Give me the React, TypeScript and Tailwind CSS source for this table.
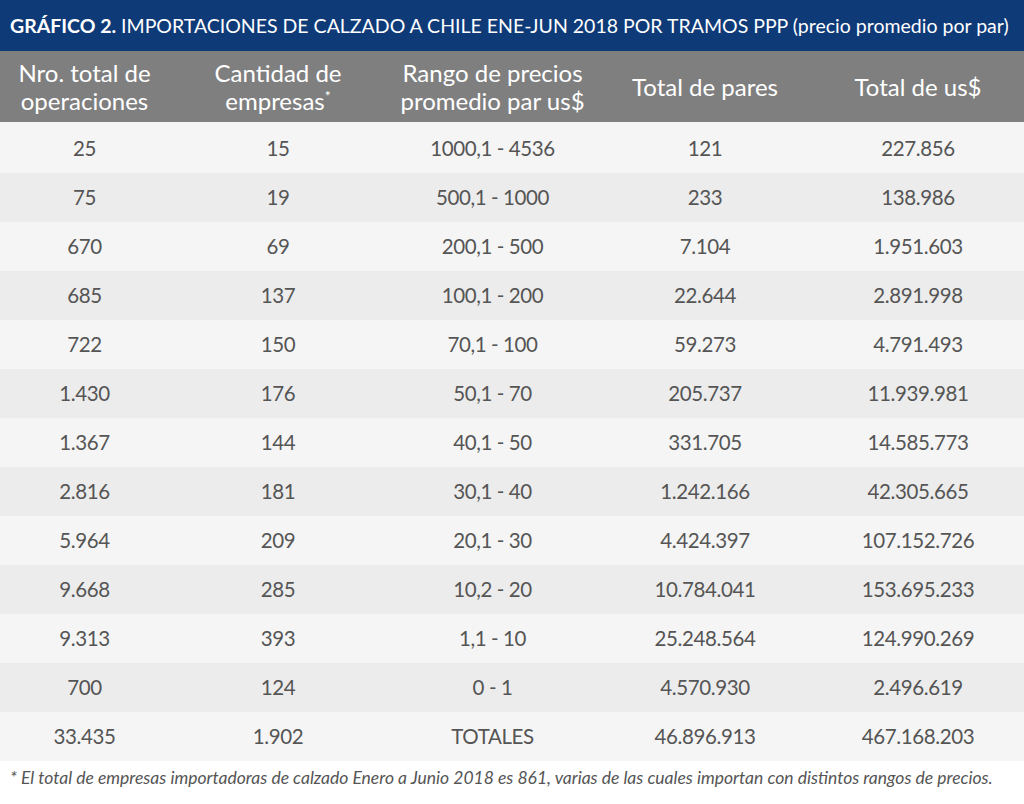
import React from "react";

const T = " - ";
const rows: string[][] = [
  ["25", "15", `1000,1${T}4536`, "121", "227.856"],
  ["75", "19", `500,1${T}1000`, "233", "138.986"],
  ["670", "69", `200,1${T}500`, "7.104", "1.951.603"],
  ["685", "137", `100,1${T}200`, "22.644", "2.891.998"],
  ["722", "150", `70,1${T}100`, "59.273", "4.791.493"],
  ["1.430", "176", `50,1${T}70`, "205.737", "11.939.981"],
  ["1.367", "144", `40,1${T}50`, "331.705", "14.585.773"],
  ["2.816", "181", `30,1${T}40`, "1.242.166", "42.305.665"],
  ["5.964", "209", `20,1${T}30`, "4.424.397", "107.152.726"],
  ["9.668", "285", `10,2${T}20`, "10.784.041", "153.695.233"],
  ["9.313", "393", `1,1${T}10`, "25.248.564", "124.990.269"],
  ["700", "124", `0${T}1`, "4.570.930", "2.496.619"],
  ["33.435", "1.902", "TOTALES", "46.896.913", "467.168.203"],
];

const widths = ["w-[169px]", "w-[218px]", "w-[211px]", "w-[214px]", "flex-1"];

export default function App() {
  return (
    <div
      className="w-[1024px] h-[804px] bg-white flex flex-col"
      style={{ fontFamily: "Lato, 'Noto Sans', sans-serif" }}
    >
      <div className="h-[51px] bg-[#0e3a78] text-white text-[19.5px] flex items-center px-[10px] whitespace-nowrap">
        <span className="font-bold">GRÁFICO 2.</span>
        <span>&nbsp;IMPORTACIONES DE CALZADO A CHILE ENE-JUN 2018 POR TRAMOS PPP (precio promedio por par)</span>
      </div>
      <div className="h-[71px] bg-[#7f7f7f] text-white text-[24px] leading-[28px] flex items-center">
        <div className={`${widths[0]} text-center`}>Nro. total de<br />operaciones</div>
        <div className={`${widths[1]} text-center`}>
          Cantidad de
          <br />
          empresas<span className="text-[14px] leading-none relative -top-[9px]">*</span>
        </div>
        <div className={`${widths[2]} text-center`}>Rango de precios<br />promedio par us$</div>
        <div className={`${widths[3]} text-center`}>Total de pares</div>
        <div className={`${widths[4]} text-center`}>Total de us$</div>
      </div>
      <div className="h-[2px] bg-[#f5f5f5]" />
      <div className="flex flex-col">
        {rows.map((r, i) => (
          <div
            key={i}
            className={`h-[49px] flex items-center text-[20.5px] tracking-[-0.4px] text-[#555555] ${i % 2 === 0 ? "bg-[#f5f5f5]" : "bg-[#ececec]"}`}
          >
            {r.map((c, j) => (
              <div key={j} className={`${widths[j]} text-center whitespace-pre`}>
                {c}
              </div>
            ))}
          </div>
        ))}
      </div>
      <div className="px-[10px] pt-[4px] text-[17.5px] italic text-[#555555] whitespace-nowrap">
        * El total de empresas importadoras de calzado Enero a Junio 2018 es 861, varias de las cuales importan con distintos rangos de precios.
      </div>
    </div>
  );
}
